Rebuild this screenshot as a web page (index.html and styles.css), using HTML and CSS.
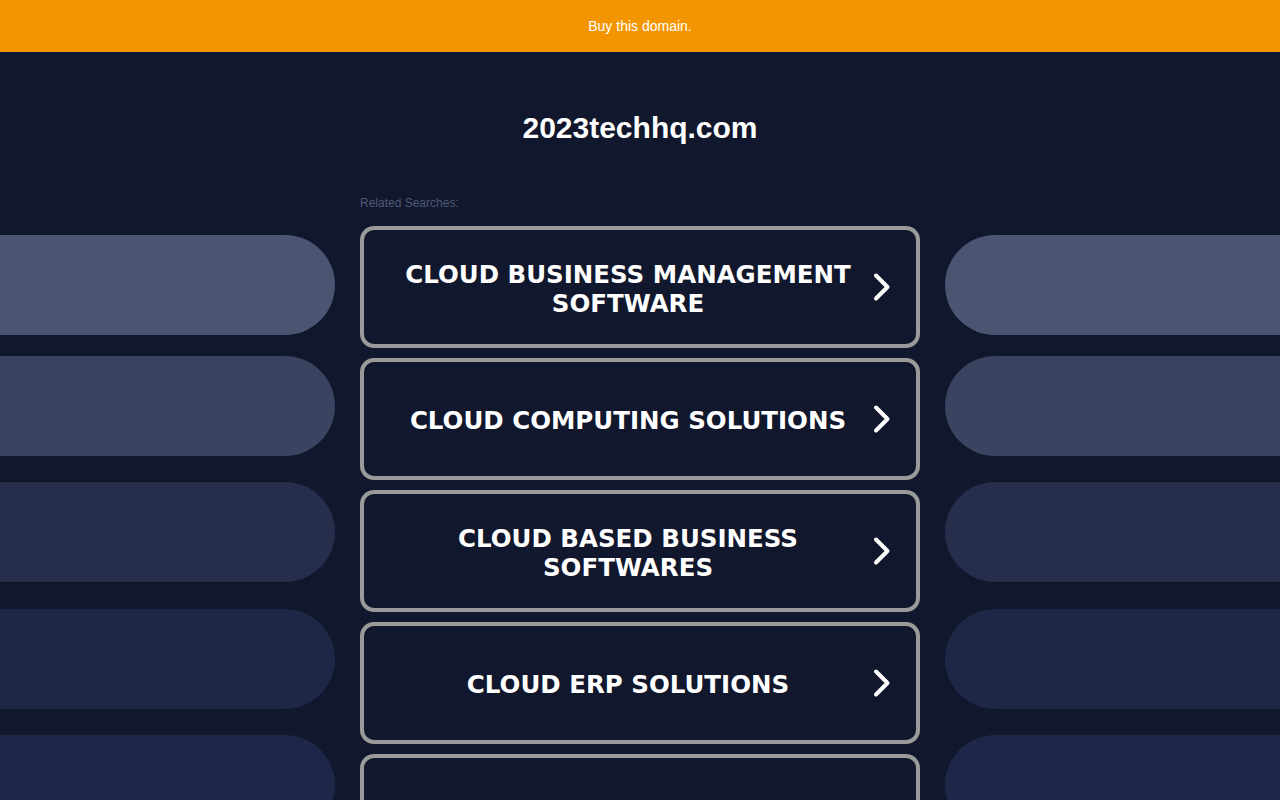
FILE: index.html
```html
<!DOCTYPE html>
<html lang="en">
<head>
<meta charset="utf-8">
<title>2023techhq.com</title>
<link rel="stylesheet" href="styles.css">
</head>
<body>
<div class="topbar"><a class="buy" href="#">Buy this domain.</a></div>
<h1 class="domain">2023techhq.com</h1>
<div class="layout">
  <div class="side side-left">
    <div class="pill p1"></div>
    <div class="pill p2"></div>
    <div class="pill p3"></div>
    <div class="pill p4"></div>
    <div class="pill p5"></div>
  </div>
  <div class="center">
    <div class="related">Related Searches:</div>
    <div class="links">
      <a class="link" href="#"><span class="label">CLOUD BUSINESS MANAGEMENT SOFTWARE</span><span class="chev"><svg width="18" height="30" viewBox="0 0 18 30"><path d="M3 3.5 L14.5 15 L3 26.5" fill="none" stroke="#fff" stroke-width="4" stroke-linecap="round" stroke-linejoin="round"/></svg></span></a>
      <a class="link" href="#"><span class="label">CLOUD COMPUTING SOLUTIONS</span><span class="chev"><svg width="18" height="30" viewBox="0 0 18 30"><path d="M3 3.5 L14.5 15 L3 26.5" fill="none" stroke="#fff" stroke-width="4" stroke-linecap="round" stroke-linejoin="round"/></svg></span></a>
      <a class="link" href="#"><span class="label">CLOUD BASED BUSINESS SOFTWARES</span><span class="chev"><svg width="18" height="30" viewBox="0 0 18 30"><path d="M3 3.5 L14.5 15 L3 26.5" fill="none" stroke="#fff" stroke-width="4" stroke-linecap="round" stroke-linejoin="round"/></svg></span></a>
      <a class="link" href="#"><span class="label">CLOUD ERP SOLUTIONS</span><span class="chev"><svg width="18" height="30" viewBox="0 0 18 30"><path d="M3 3.5 L14.5 15 L3 26.5" fill="none" stroke="#fff" stroke-width="4" stroke-linecap="round" stroke-linejoin="round"/></svg></span></a>
      <a class="link" href="#"><span class="label">CLOUD HOSTING SERVICES</span><span class="chev"><svg width="18" height="30" viewBox="0 0 18 30"><path d="M3 3.5 L14.5 15 L3 26.5" fill="none" stroke="#fff" stroke-width="4" stroke-linecap="round" stroke-linejoin="round"/></svg></span></a>
    </div>
  </div>
  <div class="side side-right">
    <div class="pill p1"></div>
    <div class="pill p2"></div>
    <div class="pill p3"></div>
    <div class="pill p4"></div>
    <div class="pill p5"></div>
  </div>
</div>
</body>
</html>
```

FILE: styles.css
```css
html, body {
  margin: 0;
  padding: 0;
}
body {
  background: #11172c;
  font-family: "Liberation Sans", Arial, sans-serif;
  height: 800px;
  overflow: hidden;
}
.topbar {
  height: 52px;
  background: #f39500;
  display: flex;
  align-items: center;
  justify-content: center;
}
.buy {
  color: #fff;
  font-size: 14px;
  text-decoration: none;
  line-height: 16px;
}
.domain {
  margin: 59px 0 0;
  height: 34px;
  line-height: 34px;
  font-size: 30px;
  font-weight: bold;
  color: #fff;
  text-align: center;
}
.layout {
  margin-top: 40px;
  display: grid;
  grid-template-columns: 335px 560px 335px;
  column-gap: 25px;
}
.side {
  padding-top: 50px;
  display: flex;
  flex-direction: column;
}
.pill {
  height: 100px;
  margin-bottom: 26px;
}
.pill.p1 { margin-bottom: 21px; }
.pill.p3 { margin-bottom: 27px; }
.side-left .pill { border-radius: 0 50px 50px 0; }
.side-right .pill { border-radius: 50px 0 0 50px; }
.p1 { background: #4b5471; }
.p2 { background: #3a435f; }
.p3 { background: #262e4c; }
.p4 { background: #1f2747; }
.p5 { background: #1e2748; }
.center {
  display: flex;
  flex-direction: column;
}
.related {
  margin-top: 11px;
  font-size: 12px;
  line-height: 14px;
  color: #4f5877;
  margin-bottom: 16px;
}
.links {
  display: flex;
  flex-direction: column;
  gap: 10px;
}
.link {
  box-sizing: border-box;
  height: 122px;
  border: 4px solid #9a9a9a;
  border-radius: 14px;
  display: flex;
  align-items: center;
  padding: 3px 4px 0 40px;
  text-decoration: none;
  color: #fff;
}
.label {
  flex: 1;
  text-align: center;
  font-family: "DejaVu Sans", Verdana, sans-serif;
  font-weight: bold;
  font-size: 24.5px;
  line-height: 29px;
}
.chev {
  width: 60px;
  display: flex;
  justify-content: center;
  align-items: center;
  margin-top: -3px;
}
.chev svg { display: block; }
```
